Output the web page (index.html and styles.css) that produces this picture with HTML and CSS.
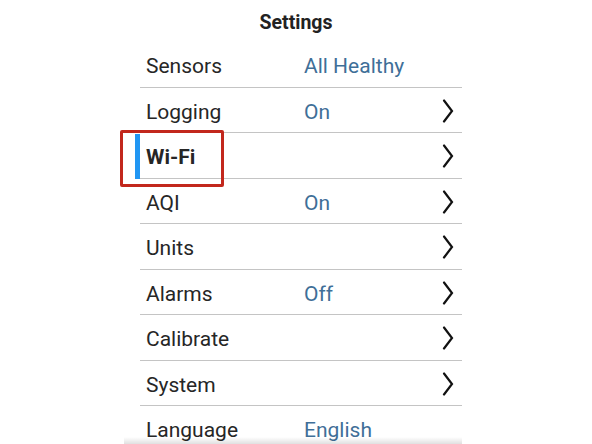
FILE: index.html
```html
<!DOCTYPE html>
<html>
<head>
<meta charset="utf-8">
<link rel="stylesheet" href="styles.css">
</head>
<body>
<div class="screen">
  <h1 class="title">Settings</h1>
  <ul class="list">
    <li class="row"><span class="label">Sensors</span><span class="value">All Healthy</span></li>
    <li class="row"><span class="label">Logging</span><span class="value">On</span><svg class="chev" viewBox="0 0 12 24"><polyline points="2,1.5 10,12 2,22.5"/></svg></li>
    <li class="row row-focus"><span class="bar"></span><span class="label bold">Wi-Fi</span><span class="value"></span><svg class="chev" viewBox="0 0 12 24"><polyline points="2,1.5 10,12 2,22.5"/></svg><span class="focus-box"></span></li>
    <li class="row"><span class="label">AQI</span><span class="value">On</span><svg class="chev" viewBox="0 0 12 24"><polyline points="2,1.5 10,12 2,22.5"/></svg></li>
    <li class="row"><span class="label">Units</span><span class="value"></span><svg class="chev" viewBox="0 0 12 24"><polyline points="2,1.5 10,12 2,22.5"/></svg></li>
    <li class="row"><span class="label">Alarms</span><span class="value">Off</span><svg class="chev" viewBox="0 0 12 24"><polyline points="2,1.5 10,12 2,22.5"/></svg></li>
    <li class="row"><span class="label">Calibrate</span><span class="value"></span><svg class="chev" viewBox="0 0 12 24"><polyline points="2,1.5 10,12 2,22.5"/></svg></li>
    <li class="row"><span class="label">System</span><span class="value"></span><svg class="chev" viewBox="0 0 12 24"><polyline points="2,1.5 10,12 2,22.5"/></svg></li>
    <li class="row last"><span class="label">Language</span><span class="value">English</span></li>
  </ul>
  <div class="shade"></div>
</div>
</body>
</html>
```
FILE: styles.css
```css
html, body {
  margin: 0;
  padding: 0;
  background: #ffffff;
  overflow: hidden;
}
.screen {
  position: relative;
  width: 592px;
  height: 444px;
  overflow: hidden;
  font-family: Roboto, "Liberation Sans", sans-serif;
  color: #262626;
}
.title {
  margin: 0;
  height: 42px;
  display: flex;
  align-items: center;
  justify-content: center;
  font-size: 19.5px;
  font-weight: 700;
  color: #222222;
  padding-top: 3px;
  box-sizing: border-box;
}
.list {
  list-style: none;
  margin: 0 0 0 140px;
  padding: 0;
  width: 322px;
}
.row {
  position: relative;
  display: flex;
  align-items: center;
  height: 44.5px;
  box-sizing: content-box;
  border-bottom: 1.2px solid #c4c4c4;
  font-size: 21px;
}
.row.last {
  border-bottom: none;
}
.label {
  width: 158px;
  padding-left: 6px;
  padding-top: 4px;
  flex: none;
}
.bold {
  font-weight: 700;
}
.value {
  flex: 1;
  padding-top: 4px;
  color: #3f6f98;
}
.chev {
  width: 12px;
  height: 24px;
  margin-right: 8px;
  margin-top: 2px;
  flex: none;
}
.chev polyline {
  fill: none;
  stroke: #111111;
  stroke-width: 2.2;
  stroke-linecap: round;
  stroke-linejoin: miter;
}
.bar {
  position: absolute;
  left: -5px;
  top: 1px;
  bottom: -1px;
  width: 5px;
  background: #2196f3;
}
.focus-box {
  position: absolute;
  left: -20px;
  top: -3px;
  width: 104px;
  height: 57px;
  box-sizing: border-box;
  border: 3px solid #c2271c;
  border-radius: 2px;
}
.shade {
  position: absolute;
  left: 124px;
  width: 338px;
  top: 437px;
  height: 7px;
  background: linear-gradient(to bottom, rgba(0,0,0,0), rgba(0,0,0,0.12));
}
```
